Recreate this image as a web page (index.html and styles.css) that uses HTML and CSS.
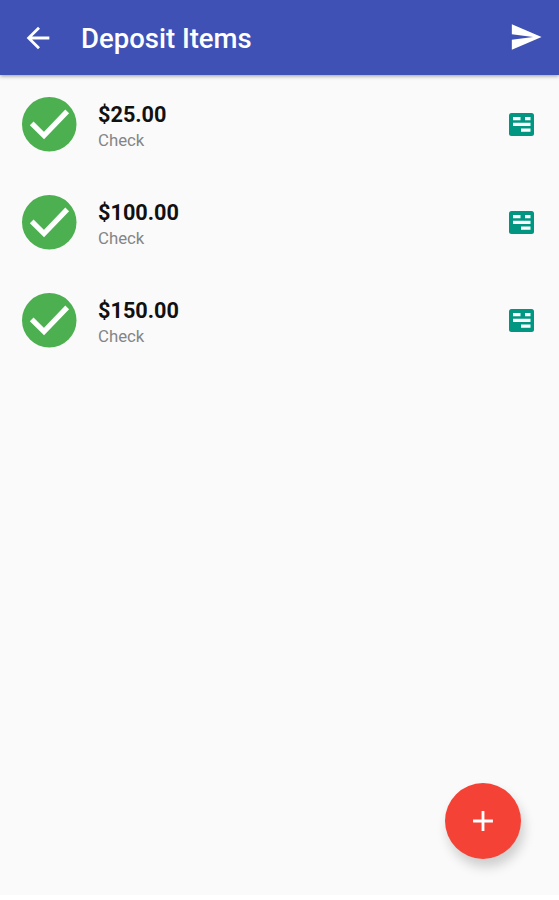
FILE: index.html
```html
<!DOCTYPE html>
<html lang="en">
<head>
<meta charset="utf-8">
<title>Deposit Items</title>
<link rel="stylesheet" href="styles.css">
</head>
<body>
<div class="screen">
  <header class="app-bar">
    <svg class="back" viewBox="0 0 24 24"><path d="M20 11H7.83l5.59-5.59L12 4l-8 8 8 8 1.41-1.41L7.83 13H20v-2z"/></svg>
    <h1 class="title">Deposit Items</h1>
    <svg class="send" viewBox="0 0 24 24"><path d="M2.01 21 23 12 2.01 3 2 10l15 2-15 2z"/></svg>
  </header>
  <main class="items">
    <div class="item">
      <svg class="status" viewBox="0 0 54 54"><circle cx="27" cy="27" r="27"/><path d="M9.6 26.2 21.8 38.2 44.8 14.2"/></svg>
      <div class="details"><div class="amount">$25.00</div><div class="kind">Check</div></div>
      <svg class="slip" viewBox="0 0 25 23"><rect width="25" height="23" rx="2.5"/><path d="M4 4h7.5v3.2H4zM16 4h5.5v3.2H16zM4 9.7h17.5v3.3H4zM12 15.4h9.5v3.3H12z"/></svg>
    </div>
    <div class="item">
      <svg class="status" viewBox="0 0 54 54"><circle cx="27" cy="27" r="27"/><path d="M9.6 26.2 21.8 38.2 44.8 14.2"/></svg>
      <div class="details"><div class="amount">$100.00</div><div class="kind">Check</div></div>
      <svg class="slip" viewBox="0 0 25 23"><rect width="25" height="23" rx="2.5"/><path d="M4 4h7.5v3.2H4zM16 4h5.5v3.2H16zM4 9.7h17.5v3.3H4zM12 15.4h9.5v3.3H12z"/></svg>
    </div>
    <div class="item">
      <svg class="status" viewBox="0 0 54 54"><circle cx="27" cy="27" r="27"/><path d="M9.6 26.2 21.8 38.2 44.8 14.2"/></svg>
      <div class="details"><div class="amount">$150.00</div><div class="kind">Check</div></div>
      <svg class="slip" viewBox="0 0 25 23"><rect width="25" height="23" rx="2.5"/><path d="M4 4h7.5v3.2H4zM16 4h5.5v3.2H16zM4 9.7h17.5v3.3H4zM12 15.4h9.5v3.3H12z"/></svg>
    </div>
  </main>
  <button class="fab" aria-label="Add item"><svg viewBox="0 0 24 24"><path d="M19 13h-6v6h-2v-6H5v-2h6V5h2v6h6v2z"/></svg></button>
</div>
</body>
</html>
```
FILE: styles.css
```css
* { box-sizing: border-box; }
body {
  margin: 0;
  background: #fff;
  font-family: Roboto, "Liberation Sans", sans-serif;
}
svg { display: block; flex: none; }
.screen {
  position: relative;
  height: 895px;
  background: #fafafa;
}
.app-bar {
  display: flex;
  align-items: center;
  height: 75px;
  padding: 0 16px 0 21px;
  background: #3f51b5;
  box-shadow: 0 1px 4px rgba(0, 0, 0, .4);
}
.back { width: 34px; height: 34px; fill: #fff; }
.title {
  flex: 1;
  margin: 2px 0 0 26px;
  color: #fff;
  font-size: 27.5px;
  font-weight: 500;
  line-height: 32px;
}
.send { width: 34px; height: 34px; margin-top: -1px; fill: #fff; }
.item {
  display: flex;
  align-items: center;
  height: 98px;
  padding: 0 25px 0 22px;
}
.status { width: 54.5px; height: 54.5px; margin-top: .5px; }
.status circle { fill: #4caf50; }
.status path { fill: none; stroke: #fff; stroke-width: 5.2; }
.details { flex: 1; margin: 6px 0 0 21.5px; }
.amount {
  color: #111;
  font-size: 21.7px;
  font-weight: 700;
  line-height: 26px;
}
.kind {
  color: #858585;
  font-size: 16.8px;
  line-height: 24px;
}
.slip { width: 25px; height: 23px; margin-top: 1px; }
.slip rect { fill: #009682; }
.slip path { fill: #fff; }
.fab {
  position: absolute;
  right: 38px;
  bottom: 36px;
  display: grid;
  place-items: center;
  width: 76px;
  height: 76px;
  padding: 0;
  border: 0;
  border-radius: 50%;
  background: #f44336;
  box-shadow: 3px 8px 12px rgba(0, 0, 0, .18);
}
.fab svg { width: 34px; height: 34px; fill: #fff; }
```
